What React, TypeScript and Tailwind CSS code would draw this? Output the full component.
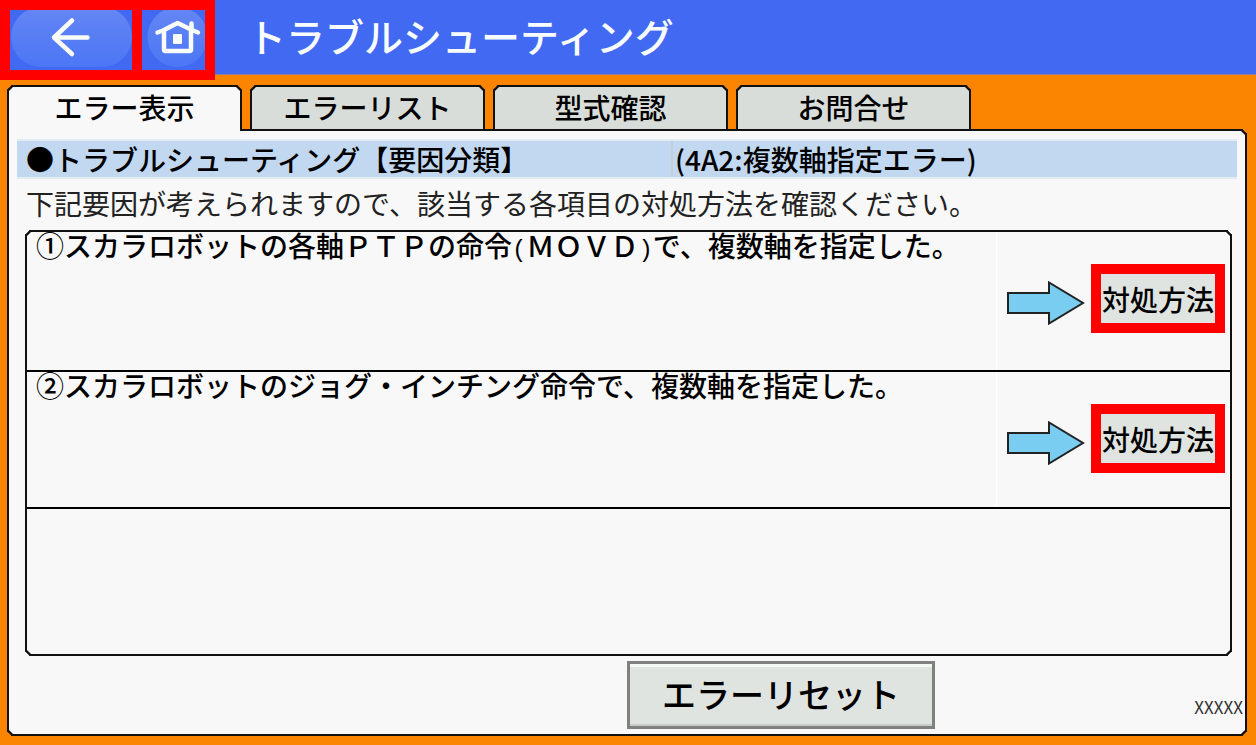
import React, { useState } from "react";
import clsx from "clsx";

const tabs = ["エラー表示", "エラーリスト", "型式確認", "お問合せ"];

const BackIcon = () => (
  <svg viewBox="0 0 122 60" className="h-[60px] w-[122px]" fill="none" aria-hidden="true">
    <defs>
      <linearGradient id="back" x1="0" y1="0" x2="0" y2="1">
        <stop offset="0" stopColor="#6586f4" />
        <stop offset="1" stopColor="#4b76f5" />
      </linearGradient>
    </defs>
    <rect x="1" y="-3" width="121" height="60" rx="30" fill="url(#back)" />
    <path
      d="M62 10.5 44 27.5 62 44M45 27.5H77.5"
      stroke="#f8fbf8"
      strokeWidth="4.5"
      strokeLinecap="round"
      strokeLinejoin="round"
    />
  </svg>
);

const HomeIcon = () => (
  <svg viewBox="0 0 63 60" className="h-[60px] w-[63px]" fill="none" aria-hidden="true">
    <defs>
      <linearGradient id="home" x1="0" y1="0" x2="0" y2="1">
        <stop offset="0" stopColor="#6586f4" />
        <stop offset="1" stopColor="#4b76f5" />
      </linearGradient>
    </defs>
    <circle cx="35.5" cy="27" r="30" fill="url(#home)" />
    <path
      d="M15.5 22.5 21 20.5 35.5 13 50 20 56 22.5M22 21V39.5Q22 41 23.5 41H47.5Q49 41 49 39.5V21"
      stroke="#f8fbf8"
      strokeWidth="4.5"
      strokeLinecap="round"
      strokeLinejoin="round"
    />
    <path d="M49.5 13.5V19" stroke="#f8fbf8" strokeWidth="4.5" strokeLinecap="round" />
    <rect x="31" y="24" width="9" height="10" rx="1" fill="#f8fbf8" />
  </svg>
);

const Arrow = () => (
  <svg viewBox="0 0 78 44" className="mt-[17px] h-[44px] w-[78px] shrink-0" aria-hidden="true">
    <path d="M1 12H42V1.5L76 22 42 42.500V32H1Z" fill="#78cdf0" stroke="#222" strokeWidth="2" />
  </svg>
);

type CauseProps = {
  className: string;
  children: React.ReactNode;
};

const Cause = ({ className, children }: CauseProps) => (
  <li className={clsx("flex items-start border-b-2 border-black pr-[5px]", className)}>
    <p className="ml-[9px] flex-1 self-stretch border-r border-white text-[28px] leading-[26px] font-medium text-black">
      {children}
    </p>
    <div className="flex items-start gap-[6px] pt-8 pl-[10px]">
      <Arrow />
      <button
        type="button"
        className="h-[69px] w-[134px] border-[10px] border-[#ff0000] bg-[#e0e4e0] text-[28px] leading-[50px] font-medium whitespace-nowrap text-black"
      >
        対処方法
      </button>
    </div>
  </li>
);

// half width parenthesis
const Paren = ({ children }: { children: string }) => (
  <span className="font-['Liberation_Mono'] text-[24px]">{children}</span>
);

const App = () => {
  const [active, setActive] = useState(0);

  return (
    <div className="flex min-h-screen flex-col bg-[#fb8500] font-['Noto_Sans_CJK_JP',sans-serif]">
      <header className="flex h-[75px] items-start border-b border-[#8f7f9a] bg-[#4169f2]">
        <nav className="flex h-20 shrink-0 gap-[10px] border-[10px] border-[#ff0000] bg-[#ff0000]">
          <button type="button" aria-label="戻る" className="overflow-hidden bg-[#4169f2]">
            <BackIcon />
          </button>
          <button type="button" aria-label="ホーム" className="overflow-hidden bg-[#4169f2]">
            <HomeIcon />
          </button>
        </nav>
        <h1 className="pl-[32px] text-[39px] leading-[70px] font-medium text-[#f8fcff]">
          トラブルシューティング
        </h1>
      </header>

      <div className="flex flex-1 flex-col pt-[10px] pr-[9px] pb-[9px] pl-[7px]">
        <div role="tablist" className="flex gap-2">
          {tabs.map((tab, i) => (
            <button
              key={tab}
              type="button"
              role="tab"
              aria-selected={active === i}
              onClick={() => setActive(i)}
              className={clsx(
                "w-[235px] rounded-t-[5px] border-2 border-b-0 border-[#111] text-[28px] leading-[38px] font-medium text-black [corner-shape:bevel]",
                active === i
                  ? "relative -mb-[2px] h-[46px] bg-[#f8f8f8] pb-[4px]"
                  : "h-[44px] bg-[#d9ddd9] pb-[2px]"
              )}
            >
              {tab}
            </button>
          ))}
        </div>

        <main className="flex flex-1 flex-col rounded-[5px] rounded-tl-none border-2 border-[#111] bg-[#f8f8f8] [corner-shape:bevel]">
          <h2 className="mx-2 mt-2 flex h-10 border-y-2 border-[#e2eaf2] bg-[#c1d8f0] text-[28px] leading-[36px] font-medium text-black">
            <span className="w-[654px] pl-[9px]">●トラブルシューティング【要因分類】</span>
            <span className="flex-1 border-l-2 border-[#c4cfdc] pl-[2px]">(4A2:複数軸指定エラー)</span>
          </h2>
          <p className="mt-[4px] pl-[17px] text-[28px] leading-[40px] text-[#222]">
            下記要因が考えられますので、該当する各項目の対処方法を確認ください。
          </p>

          <ol className="mt-[7px] mr-[13px] ml-4 flex-1 rounded-[5px] border-2 border-[#111] [corner-shape:bevel]">
            <Cause className="h-[140px]">
              ①スカラロボットの各軸ＰＴＰの命令<Paren>(</Paren>ＭＯＶＤ<Paren>)</Paren>で、複数軸を指定した。
            </Cause>
            <Cause className="h-[137px]">②スカラロボットのジョグ・インチング命令で、複数軸を指定した。</Cause>
          </ol>

          <footer className="grid grid-cols-2 pt-[5px] pb-[5px]">
            <button
              type="button"
              className="col-start-2 row-start-1 h-[68px] w-[308px] border-[3px] border-[#808080] bg-[#e0e4e0] pb-[2px] text-[34px] leading-[58px] font-medium text-black shadow-[inset_0_3px_0_#f4f8f4,inset_0_-2px_0_#c8ccc8]"
            >
              エラーリセット
            </button>
            <span className="col-start-2 row-start-1 mr-[2px] mb-[10px] self-end justify-self-end text-[17px] leading-[24px] text-[#333]">
              XXXXX
            </span>
          </footer>
        </main>
      </div>
    </div>
  );
};

export default App;
